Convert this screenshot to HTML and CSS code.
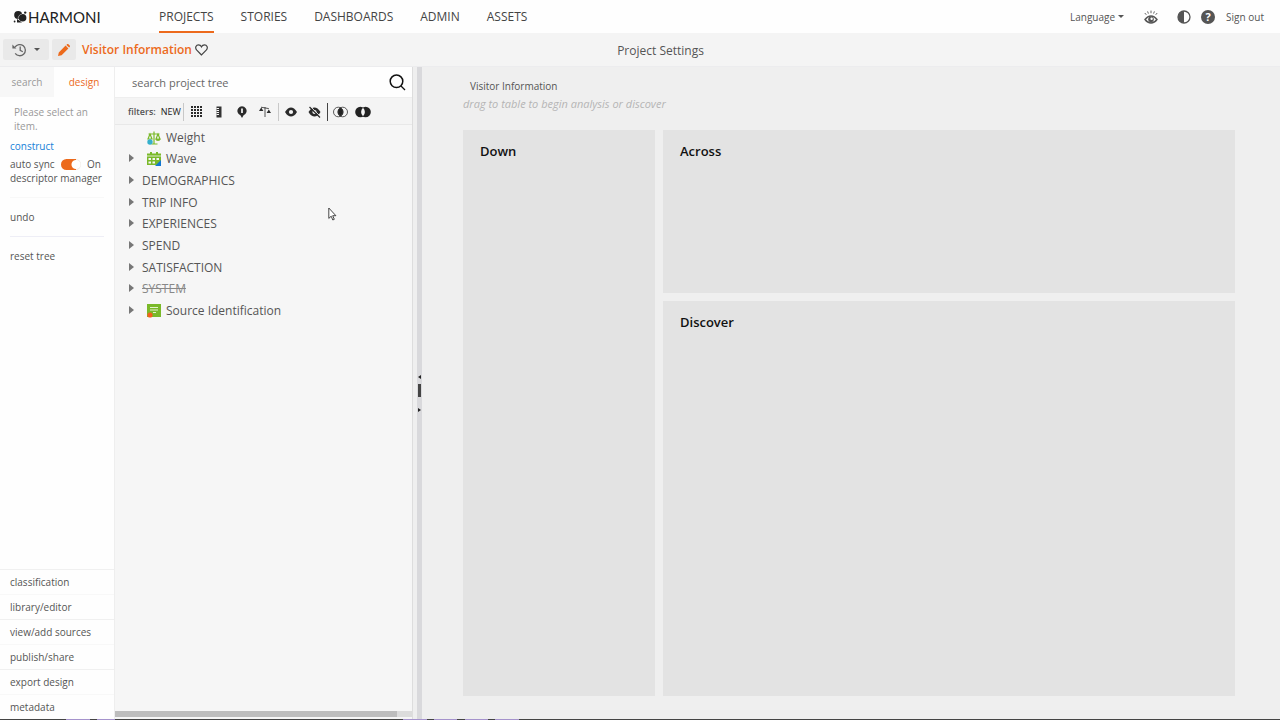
FILE: index.html
```html
<!DOCTYPE html>
<html lang="en">
<head>
  <meta charset="UTF-8">
  <meta name="viewport" content="width=device-width, initial-scale=1.0">
  <title>Harmoni – Visitor Information</title>
  <link rel="stylesheet" href="styles.css">
</head>
<body>
  <header class="topbar">
    <a class="logo" href="#">
      <svg width="15" height="14" viewBox="0 0 15 14" fill="#222">
        <circle cx="5.200" cy="5" r="4"/><circle cx="9.600" cy="7.800" r="3.800"/>
        <circle cx="12.200" cy="2.600" r="1.200"/><circle cx="1.600" cy="11.500" r=".9"/><path d="M4 9l5 3.600H4z"/>
        <path d="M5.200 8.800a4.400 4.400 0 0 1 4-4.800" fill="none" stroke="#fff" stroke-width=".5"/>
      </svg>
      <span class="logo-text">HARMONI</span>
    </a>
    <nav class="main-nav">
      <a class="active" href="#">PROJECTS</a>
      <a href="#">STORIES</a>
      <a href="#">DASHBOARDS</a>
      <a href="#">ADMIN</a>
      <a href="#">ASSETS</a>
    </nav>
    <div class="tools">
      <button class="language">Language <span class="caret"></span></button>
      <button class="tool-eye" aria-label="Preview">
        <svg width="14" height="14" viewBox="0 0 14 14" fill="none" stroke="#555">
          <path d="M1 9.500C3 6.800 5 6 7 6s4 .8 6 3.500C11 12.200 9 13 7 13S3 12.200 1 9.500z" stroke-width="1.400"/>
          <circle cx="7" cy="9.300" r="2.800" fill="#555" stroke="none"/><circle cx="7.600" cy="8.800" r="1.200" fill="#fff" stroke="none"/>
          <path d="M.8 3l1.500 1.800M3.600 1.400l.8 2.200M7 .6v2.600M10.400 1.400l-.8 2.200M13.200 3l-1.500 1.800" stroke-width=".9"/>
        </svg>
      </button>
      <button class="tool-contrast" aria-label="Contrast">
        <svg width="14" height="14" viewBox="0 0 14 14"><circle cx="7" cy="7" r="6" fill="#fff" stroke="#555" stroke-width="1.300"/><path d="M7 1a6 6 0 0 0 0 12z" fill="#555"/></svg>
      </button>
      <button class="tool-help" aria-label="Help">?</button>
      <a class="signout" href="#">Sign out</a>
    </div>
  </header>

  <div class="subbar">
    <div class="project">
      <button class="btn-history" aria-label="History">
        <svg width="15" height="14" viewBox="0 0 15 14" fill="none" stroke="#666" stroke-width="1.300">
          <path d="M3 4.200A5.600 5.600 0 1 1 3.200 10.400M8.200 3.600V7.400l2.600 1.400"/><path d="M.4 1.400v4h4z" fill="#666" stroke="none"/>
        </svg>
        <span class="caret"></span>
      </button>
      <button class="btn-edit" aria-label="Edit">
        <svg width="12" height="12" viewBox="0 0 12 12" fill="#ec6a1c"><path d="M0 12l.8-3.600L7.600 1.600l2.800 2.800-6.800 6.800zM8.400.9l.6-.6c.5-.4 1-.4 1.400 0l1.300 1.300c.4.400.4.900 0 1.400l-.6.600z"/></svg>
      </button>
      <h1 class="project-name">Visitor Information</h1>
      <svg width="13" height="12" viewBox="0 0 13 12" fill="none" stroke="#444" stroke-width="1.200"><path d="M6.500 11L1.800 6.200C-.6 3.400 1.400.8 3.500.8c1.400 0 2.400.8 3 2 .6-1.200 1.600-2 3-2 2.100 0 4.100 2.600 1.700 5.400z"/></svg>
    </div>
    <span class="page-title">Project Settings</span>
  </div>

  <div class="workspace">
    <aside class="sidebar">
      <div class="tabs">
        <button class="tab">search</button>
        <button class="tab selected">design</button>
      </div>
      <p class="hint">Please select an item.</p>
      <a class="construct" href="#">construct</a>
      <div class="sync">
        <label for="autosync">auto sync</label>
        <input type="checkbox" id="autosync" class="switch" checked>
        <span>On</span>
      </div>
      <a class="descriptor" href="#">descriptor manager</a>
      <ul class="actions">
        <li><a href="#">undo</a></li>
        <li><a href="#">reset tree</a></li>
      </ul>
      <ul class="links">
        <li><a href="#">classification</a></li>
        <li><a href="#">library/editor</a></li>
        <li><a href="#">view/add sources</a></li>
        <li><a href="#">publish/share</a></li>
        <li><a href="#">export design</a></li>
        <li><a href="#">metadata</a></li>
      </ul>
    </aside>

    <section class="tree-panel">
      <div class="tree-search">
        <input type="text" placeholder="search project tree" aria-label="search project tree">
        <button aria-label="Search">
          <svg width="17" height="17" viewBox="0 0 17 17" fill="none" stroke="#111"><circle cx="7.500" cy="7.300" r="6.300" stroke-width="1.500"/><path d="M12 12l4 4" stroke-width="1.300"/></svg>
        </button>
      </div>
      <div class="filters">
        <span class="filters-label">filters:</span>
        <button class="filter-new">NEW</button>
        <span class="divider"></span>
        <div class="filter-set">
          <button aria-label="Grid">
            <svg width="11" height="11" viewBox="0 0 11 11" stroke="#2b2b2b" stroke-width="2" stroke-dasharray="2 1"><path d="M0 1h11M0 4h11M0 7h11M0 10h11"/></svg>
          </button>
          <button aria-label="Measure">
            <svg width="6" height="12" viewBox="0 0 6 12"><path d="M.5.500h5v11h-5z" fill="#333"/><path d="M.5 2.500h2.500M.5 4.500h2.500M.5 6.500h2.500M.5 8.500h2.500" stroke="#f5f5f5"/></svg>
          </button>
          <button aria-label="Location">
            <svg width="10" height="12" viewBox="0 0 10 12"><path d="M5 12L3.400 9.200A4.600 4.600 0 1 1 6.600 9.200z" fill="#2b2b2b"/><path d="M5 2.600v4.400" stroke="#eee" stroke-width="1.800"/></svg>
          </button>
          <button aria-label="Weights">
            <svg width="12" height="11" viewBox="0 0 12 11" fill="#2b2b2b"><path d="M0 5l2.200-3.600L4.400 5zM7.600 7L9.800 3.400 12 7z"/><path d="M2 1.200l7.800 1.400M6 1v10" stroke="#2b2b2b" stroke-width=".8"/></svg>
          </button>
        </div>
        <span class="divider"></span>
        <div class="filter-set">
          <button aria-label="Visible">
            <svg width="12" height="10" viewBox="0 0 12 10"><path d="M0 5C2 1.600 4 .4 6 .4s4 1.200 6 4.600C10 8.400 8 9.600 6 9.600S2 8.400 0 5z" fill="#2b2b2b"/><circle cx="6" cy="5" r="2.100" fill="#f5f5f5"/></svg>
          </button>
          <button aria-label="Hidden">
            <svg width="13" height="12" viewBox="0 0 13 12"><path d="M.5 6C2.500 2.600 4.500 1.400 6.500 1.400s4 1.200 6 4.600c-2 3.400-4 4.600-6 4.600S2.500 9.400.5 6z" fill="#2b2b2b"/><circle cx="6.500" cy="6" r="2.100" fill="#f5f5f5"/><path d="M2.500 .6L12.500 10.600" stroke="#f5f5f5"/><path d="M1.500 1L12 11.500" stroke="#2b2b2b" stroke-width="1.200"/></svg>
          </button>
        </div>
        <span class="divider dark"></span>
        <div class="filter-set">
          <button aria-label="Intersection">
            <svg width="15" height="12" viewBox="0 0 15 12"><path d="M7.500 1.800a5 5 0 0 1 0 8.400a5 5 0 0 1 0-8.400z" fill="#222" stroke="#222"/><circle cx="5.300" cy="6" r="4.800" fill="none" stroke="#333" stroke-width=".8"/><circle cx="9.700" cy="6" r="4.800" fill="none" stroke="#333" stroke-width=".8"/></svg>
          </button>
          <button aria-label="Exclusion">
            <svg width="16" height="12" viewBox="0 0 16 12" fill="#222"><circle cx="5.400" cy="6" r="5.200"/><circle cx="10.600" cy="6" r="5.200"/><path d="M8 1.800a5.600 5.600 0 0 1 0 8.400a5.600 5.600 0 0 1 0-8.400z" fill="#f5f5f5"/></svg>
          </button>
        </div>
      </div>
      <ul class="tree">
        <li class="leaf">
          <svg width="14" height="14" viewBox="0 0 14 14"><path d="M7 .5v12.500M4.500 13h6M1.500 3h11M3 3L1 8h4zM11 3L9 8h4z" fill="none" stroke="#7ab929" stroke-width="1.200"/><path d="M8.500 8h5a2.500 2 0 0 1-5 0z" fill="#7ab929"/><circle cx="3" cy="11" r="2.700" fill="#35b0cc"/></svg>
          <span>Weight</span>
        </li>
        <li class="branch">
          <svg width="14" height="14" viewBox="0 0 14 14"><path d="M0 1.500h14V13H0z" fill="#7ab929"/><path d="M3 0h2v3H3zM9 0h2v3H9z" fill="#7ab929"/><path d="M0 4h14" stroke="#f5f5f5" stroke-width=".8"/><path d="M1.500 6h2.500v2H1.500zM5.500 6H8v2H5.500zM9.500 6H12v2H9.500zM1.500 9.500h2.500v2H1.500zM5.500 9.500H8v2H5.500z" fill="#f5f5f5"/><path d="M14 8v6H8z" fill="#1277d2"/></svg>
          <span>Wave</span>
        </li>
        <li class="branch">DEMOGRAPHICS</li>
        <li class="branch">TRIP INFO</li>
        <li class="branch">EXPERIENCES</li>
        <li class="branch">SPEND</li>
        <li class="branch">SATISFACTION</li>
        <li class="branch struck"><s>SYSTEM</s></li>
        <li class="branch">
          <svg width="14" height="14" viewBox="0 0 14 14"><path d="M0 0h14v13H0z" fill="#7ab929"/><path d="M3 3.500h8M3 6h8M6 8.500h3" stroke="#e4f2cf"/><circle cx="3" cy="11" r="2.600" fill="#f2611d"/></svg>
          <span>Source Identification</span>
        </li>
      </ul>
      <div class="hscroll"><div class="thumb"></div></div>
    </section>

    <div class="splitter">
      <span class="arrow-left"></span>
      <span class="grip"></span>
      <span class="arrow-right"></span>
    </div>

    <main class="canvas">
      <h2 class="canvas-title">Visitor Information</h2>
      <p class="canvas-hint">drag to table to begin analysis or discover</p>
      <div class="zones">
        <section class="zone down"><h3>Down</h3></section>
        <section class="zone"><h3>Across</h3></section>
        <section class="zone"><h3>Discover</h3></section>
      </div>
    </main>
  </div>
  <div class="taskbar"></div>

  <svg class="pointer" width="9" height="14" viewBox="0 0 9 14" fill="#fff" stroke="#333" stroke-width=".9"><path d="M.8 1v10.400l2.400-2.200 1.600 3.800 1.500-.7-1.600-3.600h3.200z"/></svg>
</body>
</html>
```
FILE: styles.css
```css
* {
  box-sizing: border-box;
}
body {
  margin: 0;
  min-height: 100vh;
  display: flex;
  flex-direction: column;
  background: #efefef;
  color: #555;
  font-family: "Open Sans", "Noto Sans", sans-serif;
  font-size: 10px;
  line-height: 14px;
}
a {
  color: inherit;
  text-decoration: none;
}
button {
  padding: 0;
  border: none;
  background: none;
  color: inherit;
  font: inherit;
  cursor: pointer;
}
svg {
  display: block;
  flex: none;
}
ul {
  list-style: none;
  margin: 0;
  padding: 0;
}
h1, h2, h3, p {
  margin: 0;
}
.caret {
  border: 3px solid transparent;
  border-top-color: #555;
  border-bottom: none;
}

/* Top bar */
.topbar {
  display: flex;
  height: 33px;
  background: #fefefe;
}
.logo {
  display: flex;
  align-items: center;
  width: 159px;
  padding-left: 13px;
  color: #222;
}
.logo-text {
  font-family: Lato, sans-serif;
  font-size: 15px;
}
.main-nav {
  display: flex;
  gap: 27px;
  color: #444;
  font-size: 12px;
  font-weight: 500;
}
.main-nav a {
  padding-top: 10px;
}
.main-nav .active {
  border-bottom: 2px solid #ec6a1c;
}
.tools {
  display: flex;
  align-items: center;
  margin-left: auto;
  padding-right: 16px;
}
.language {
  display: flex;
  align-items: center;
  gap: 3px;
}
.tool-eye {
  margin-left: 20px;
}
.tool-contrast {
  margin-left: 19px;
}
.tool-help {
  width: 14px;
  height: 14px;
  margin: 0 11px 0 10px;
  border-radius: 50%;
  background: #555;
  color: #fff;
  font-size: 11px;
  font-weight: 700;
}

/* Project bar */
.subbar {
  position: relative;
  display: flex;
  align-items: center;
  justify-content: center;
  height: 34px;
  padding: 2px 0 0 41px;
  background: #f4f4f4;
  border-bottom: 1px solid #ececee;
}
.project {
  position: absolute;
  left: 3px;
  top: 6px;
  display: flex;
  align-items: center;
}
.btn-history, .btn-edit {
  display: flex;
  align-items: center;
  justify-content: center;
  height: 21px;
  border-radius: 2px;
  background: #e9e9e9;
}
.btn-history {
  gap: 7px;
  width: 46px;
}
.btn-edit {
  width: 24px;
  margin: 0 6px 0 3px;
}
.project-name {
  margin-right: 3px;
  color: #ec6a1c;
  font-size: 12px;
  font-weight: 600;
}
.page-title {
  font-size: 12px;
  font-weight: 500;
}

.workspace {
  display: flex;
  flex: 1;
}

/* Sidebar */
.sidebar {
  display: flex;
  flex-direction: column;
  width: 115px;
  background: #fefefe;
  border-right: 1px solid #eee;
}
.tabs {
  display: flex;
  height: 30px;
  margin-bottom: 8px;
}
.tab {
  width: 54px;
  background: #f7f7f7;
  color: #999;
}
.tab.selected {
  flex: 1;
  background: none;
  color: #ec6a1c;
}
.hint {
  padding: 0 14px;
  color: #999;
}
.construct {
  padding: 6px 10px 0;
  color: #1580d8;
}
.sync {
  display: flex;
  align-items: center;
  justify-content: space-between;
  margin-top: 4px;
  padding: 0 13px 0 10px;
}
.switch {
  appearance: none;
  width: 20px;
  height: 11px;
  margin: 0;
  border-radius: 6px;
  background: radial-gradient(circle at 15px 50%, #fff 4px, transparent 5px), linear-gradient(to right, #ec6a1c 15px, #f0e9e4 15px);
}
.descriptor {
  padding: 0 10px 12px;
}
.actions {
  margin: 0 10px;
}
.actions li {
  padding: 12px 0;
  border-top: 1px solid #f8f8f8;
}
.actions li + li {
  border-color: #eeeef6;
}
.links {
  margin-top: auto;
}
.links li {
  height: 25px;
  padding: 5px 10px;
  border-top: 1px solid #f8f8f8;
}
.links li:nth-child(odd) {
  border-color: #f0f0f0;
}

/* Project tree */
.tree-panel {
  display: flex;
  flex-direction: column;
  width: 298px;
  background: #f6f6f6;
  border-right: 1px solid #ddd;
}
.tree-search {
  display: flex;
  align-items: center;
  height: 30px;
  padding: 0 6px 0 17px;
  background: #fefefe;
}
.tree-search input {
  flex: 1;
  min-width: 0;
  padding: 2px 0 0;
  border: none;
  background: none;
  font: inherit;
  font-size: 11px;
}
.tree-search input::placeholder {
  color: #666;
}
.filters {
  display: flex;
  align-items: center;
  height: 28px;
  padding: 1px 0 0 13px;
  background: #f4f4f4;
  border-top: 1px solid #eee;
  border-bottom: 1px solid #e8e8e8;
}
.filters-label {
  margin-right: 5px;
  font-size: 9px;
  font-weight: 600;
}
.filter-new {
  margin-right: 2px;
  color: #222;
  font-size: 9px;
}
.divider {
  width: 1px;
  height: 18px;
  background: #c8c8c8;
}
.divider.dark {
  background: #444;
}
.filter-set {
  display: flex;
  align-items: center;
  padding: 0 1px;
}
.filter-set button {
  display: flex;
  justify-content: center;
  width: 23px;
}
.tree {
  display: grid;
  grid-auto-rows: 1fr;
  height: 195px;
  margin-top: 2px;
  padding-left: 14px;
  font-size: 12px;
}
.tree li {
  display: flex;
  align-items: center;
}
.tree li svg {
  margin: 0 5px;
}
.branch::before {
  content: "";
  margin: -2px 8px 0 0;
  border: 4px solid transparent;
  border-left: 5px solid #777;
  border-right: none;
}
.leaf {
  padding-left: 13px;
}
.struck {
  color: #888;
}
.hscroll {
  margin-top: auto;
  margin-bottom: 2px;
  background: #dcdcdc;
}
.thumb {
  width: 95%;
  height: 6px;
  background: #bdbdbd;
}

/* Splitter */
.splitter {
  display: flex;
  flex-direction: column;
  align-items: center;
  justify-content: center;
  gap: 5px;
  width: 5px;
  margin-left: 4px;
  background: #d9d9dc;
}
.grip {
  width: 3px;
  height: 13px;
  margin-bottom: 6px;
  background: #444;
}
.arrow-left, .arrow-right {
  border: 2px solid transparent;
}
.arrow-left {
  border-right: 3px solid #222;
  border-left: none;
}
.arrow-right {
  border-left: 3px solid #222;
  border-right: none;
}

/* Drop zones */
.canvas {
  display: flex;
  flex: 1;
  flex-direction: column;
  padding: 12px 45px 23px 41px;
}
.canvas-title {
  padding-left: 7px;
  font-size: 10px;
  font-weight: 400;
}
.canvas-hint {
  margin: 4px 0 19px;
  color: #b5b5b5;
  font-size: 11px;
  font-style: italic;
}
.zones {
  display: grid;
  flex: 1;
  grid-template-columns: 192px 1fr;
  grid-template-rows: 7fr 17fr;
  gap: 8px;
}
.zone {
  padding: 14px 17px;
  background: #e3e3e3;
}
.zone.down {
  grid-row: span 2;
}
.zone h3 {
  color: #111;
  font-size: 13px;
  font-weight: 600;
}

.taskbar {
  height: 1px;
  background: linear-gradient(to right, #444 66px, #a593cc 66px 90px, #444 90px 97px, #a593cc 97px 115px, #444 115px 403px, #a593cc 403px 427px, #444 427px 434px, #a593cc 434px 457px, #444 457px 465px, #a593cc 465px 488px, #444 488px 495px, #a593cc 495px 519px, #444 519px);
}
.pointer {
  position: absolute;
  left: 328px;
  top: 207px;
}
```
